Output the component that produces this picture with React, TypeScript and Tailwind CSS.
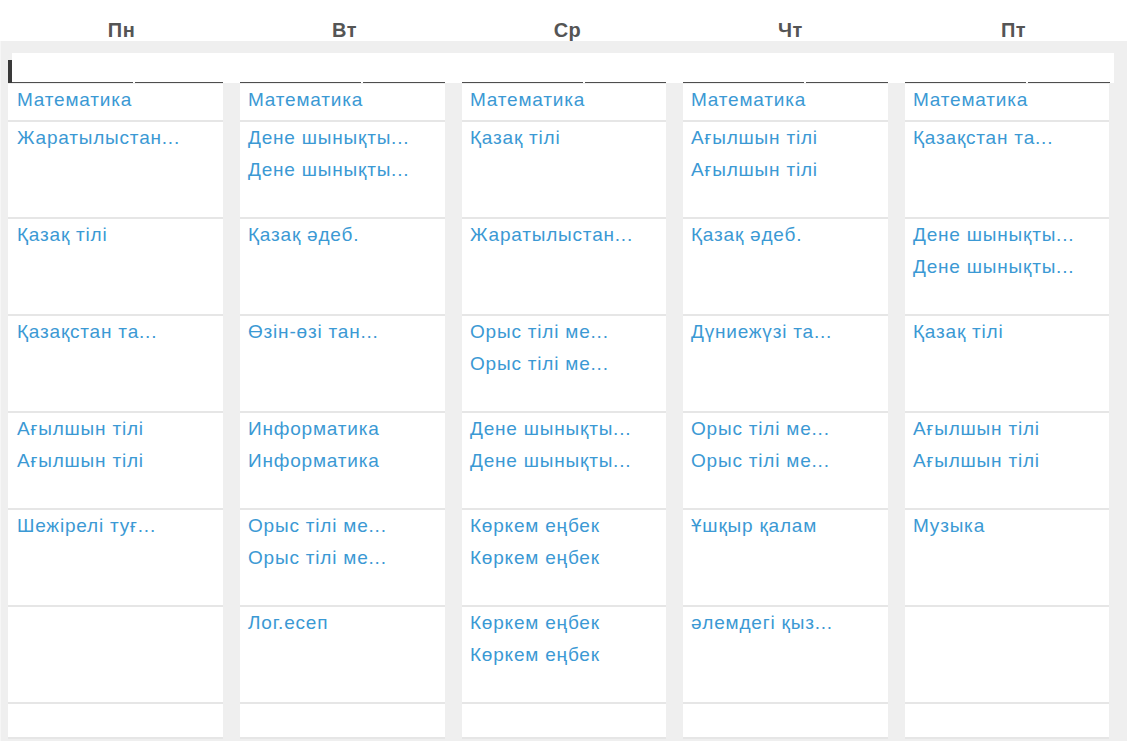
const days = ["Пн", "Вт", "Ср", "Чт", "Пт"];

// column widths in px, matched to the schedule grid
const colWidths = ["w-[215px]", "w-[205px]", "w-[204px]", "w-[205px]", "w-[204px]"];
const headWidths = ["w-[211px]", "w-[205px]", "w-[204px]", "w-[205px]", "w-[205px]"];

type Cell = string[];

const schedule: Cell[][] = [
  // Пн
  [
    ["Математика"],
    ["Жаратылыстан..."],
    ["Қазақ тілі"],
    ["Қазақстан та..."],
    ["Ағылшын тілі", "Ағылшын тілі"],
    ["Шежірелі туғ..."],
    [],
    [],
  ],
  // Вт
  [
    ["Математика"],
    ["Дене шынықты...", "Дене шынықты..."],
    ["Қазақ әдеб."],
    ["Өзін-өзі тан..."],
    ["Информатика", "Информатика"],
    ["Орыс тілі ме...", "Орыс тілі ме..."],
    ["Лог.есеп"],
    [],
  ],
  // Ср
  [
    ["Математика"],
    ["Қазақ тілі"],
    ["Жаратылыстан..."],
    ["Орыс тілі ме...", "Орыс тілі ме..."],
    ["Дене шынықты...", "Дене шынықты..."],
    ["Көркем еңбек", "Көркем еңбек"],
    ["Көркем еңбек", "Көркем еңбек"],
    [],
  ],
  // Чт
  [
    ["Математика"],
    ["Ағылшын тілі", "Ағылшын тілі"],
    ["Қазақ әдеб."],
    ["Дүниежүзі та..."],
    ["Орыс тілі ме...", "Орыс тілі ме..."],
    ["Ұшқыр қалам"],
    ["әлемдегі қыз..."],
    [],
  ],
  // Пт
  [
    ["Математика"],
    ["Қазақстан та..."],
    ["Дене шынықты...", "Дене шынықты..."],
    ["Қазақ тілі"],
    ["Ағылшын тілі", "Ағылшын тілі"],
    ["Музыка"],
    [],
    [],
  ],
];

const rowHeight = (i: number) => {
  if (i === 0) return "h-[38px]";
  if (i === 7) return "h-[35px]";
  return "h-[97px]";
};

export default function App() {
  return (
    <div
      className="w-[1127px] h-[741px] bg-white flex flex-col overflow-hidden"
      style={{ fontFamily: '"Liberation Sans", Arial, sans-serif' }}
    >
      {/* day names */}
      <div className="h-[41px] flex pl-[10px] shrink-0">
        {days.map((d) => (
          <div
            key={d}
            className="w-[223px] text-center pt-[18px] leading-[24px] text-[20px] tracking-[0.5px] font-bold text-[#555]"
          >
            {d}
          </div>
        ))}
      </div>

      <div className="flex-1 bg-[#efefef] pt-[12px] border-l border-[#f6f6f6]">
        {/* column header strip */}
        <div className="flex h-[30px] ml-[7px]">
          <div className="w-[4px] mt-[7px] h-[23px] bg-[#3a3a3a]" />
          <div className="w-[1102px] bg-white flex gap-[17px]">
            {headWidths.map((w, i) => (
              <div key={i} className={`${w} flex items-end`}>
                <div className="w-[121px] h-px bg-[#4e4e4e]" />
                <div className="w-[2px]" />
                <div className="flex-1 h-px bg-[#4e4e4e]" />
              </div>
            ))}
          </div>
        </div>

        {/* lessons */}
        <div className="flex gap-[17px] ml-[7px] mt-px">
          {schedule.map((col, ci) => (
            <div key={ci} className={`${colWidths[ci]} bg-white flex flex-col`}>
              {col.map((cell, ri) => (
                <div
                  key={ri}
                  className={`${rowHeight(ri)} border-b-2 border-[#e6e6e6] ${ci === 0 ? "pl-[9px]" : "pl-[8px]"} pt-[6px]`}
                >
                  {cell.map((t, k) => (
                    <div
                      key={k}
                      className="text-[19px] leading-[20px] tracking-[0.8px] mb-[12px] text-[#3b99d4] whitespace-nowrap"
                    >
                      {t}
                    </div>
                  ))}
                </div>
              ))}
            </div>
          ))}
        </div>
      </div>
    </div>
  );
}
